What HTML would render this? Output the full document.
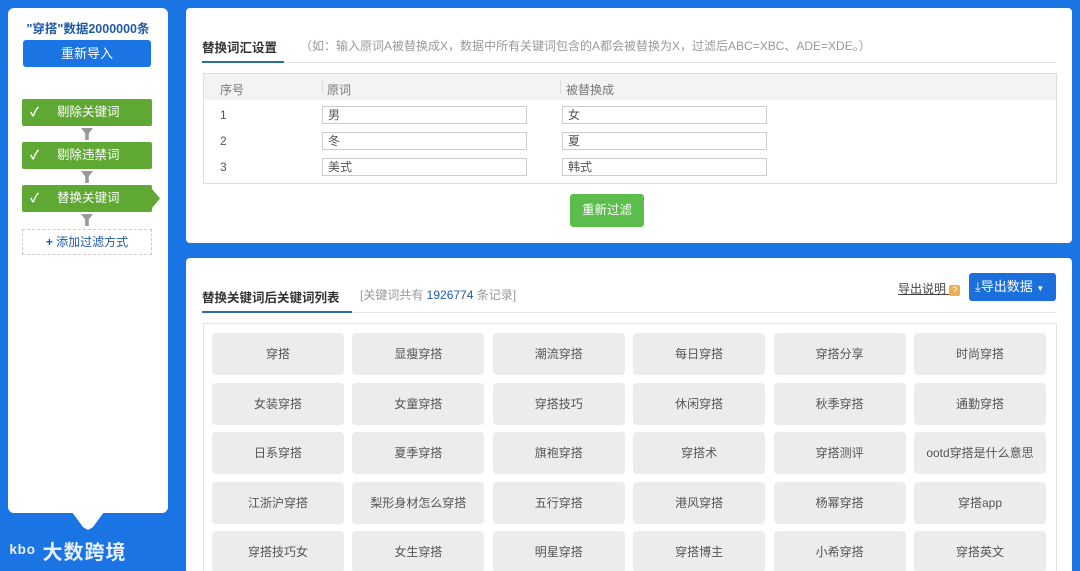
<!DOCTYPE html><html style="width:1080px;height:571px;overflow:hidden"><head><meta charset="utf-8"><style>
*{margin:0;padding:0;box-sizing:border-box}
body{width:1080px;height:571px;overflow:hidden;background:#1b74e4;font-family:"Liberation Sans","Noto Sans CJK SC",sans-serif;position:relative;font-size:12px;color:#555}
.abs{position:absolute}
.side{left:8px;top:8px;width:160px;height:505px;background:#fff;border-radius:6px}
.notch{left:63px;top:500px;width:50px;height:30px;background:#fff;clip-path:polygon(0 0,100% 0,60% 90%,50% 100%,40% 90%)}
.step{left:22px;width:130px;height:27px;background:#5ea833;color:#fff;border-radius:2px;font-size:12.5px;line-height:27px}
.step b{position:absolute;left:8px;font-weight:bold}
.step span{position:absolute;left:35px}
.fun{left:81px;width:12px;height:12px;background:#999;clip-path:polygon(0 0,100% 0,65% 45%,65% 100%,35% 100%,35% 45%)}
.card{background:#fff;border-radius:4px;left:186px;width:886px}
.tab{font-size:12.5px;color:#333;font-weight:bold}
.inp{position:absolute;height:18px;border:1px solid #ccc;font-size:12px;color:#555;padding-left:5px;line-height:16px;width:205px}
.kw{position:absolute;width:132px;height:42px;background:#ececec;border-radius:4px;text-align:center;line-height:42px;font-size:12px;color:#555}
</style></head><body>
<div class="abs side"></div><div class="abs notch"></div>
<div class="abs" style="left:8px;top:18px;width:160px;text-align:center;color:#1f5aa8;font-weight:bold;font-size:12.5px">"穿搭"数据2000000条</div>
<div class="abs" style="left:23px;top:40px;width:128px;height:27px;background:#1b74e4;border-radius:3px;color:#fff;text-align:center;line-height:27px;font-size:13px">重新导入</div>
<div class="abs step" style="top:99px"><b>✓</b><span>剔除关键词</span></div>
<div class="abs fun" style="top:128px"></div>
<div class="abs step" style="top:142px"><b>✓</b><span>剔除违禁词</span></div>
<div class="abs fun" style="top:171px"></div>
<div class="abs step" style="top:185px"><b>✓</b><span>替换关键词</span></div>
<div class="abs" style="left:152px;top:189px;width:8px;height:19px;background:#5ea833;clip-path:polygon(0 0,100% 50%,0 100%)"></div>
<div class="abs fun" style="top:214px"></div>
<div class="abs" style="left:22px;top:229px;width:130px;height:26px;border:1px dashed #ccc;text-align:center;line-height:24px;color:#1f5aa8;font-size:12px"><b>+</b> 添加过滤方式</div>
<div class="abs" style="left:10px;top:536px;color:#e8f0ff;font-size:20px;font-weight:bold;letter-spacing:1px">ᵏᵇᵒ 大数跨境</div>

<div class="abs card" style="top:8px;height:235px"></div>
<div class="abs tab" style="left:202px;top:37px">替换词汇设置</div>
<div class="abs" style="left:300px;top:37px;color:#999;font-size:12px">（如：输入原词A被替换成X，数据中所有关键词包含的A都会被替换为X，过滤后ABC=XBC、ADE=XDE。）</div>
<div class="abs" style="left:202px;top:62px;width:854px;height:1px;background:#e5e5e5"></div>
<div class="abs" style="left:202px;top:61px;width:82px;height:2px;background:#2b6cb0"></div>
<div class="abs" style="left:203px;top:73px;width:854px;height:111px;border:1px solid #ddd"></div>
<div class="abs" style="left:204px;top:74px;width:852px;height:26px;background:#f3f3f3"></div>
<div class="abs" style="left:220px;top:81px;color:#777">序号</div><div class="abs" style="left:322px;top:80px;width:1px;height:14px;background:#ddd"></div>
<div class="abs" style="left:327px;top:81px;color:#777">原词</div><div class="abs" style="left:560px;top:80px;width:1px;height:14px;background:#ddd"></div>
<div class="abs" style="left:566px;top:81px;color:#777">被替换成</div>
<div class="abs" style="left:220px;top:108px">1</div><div class="inp" style="left:322px;top:106px">男</div><div class="inp" style="left:562px;top:106px">女</div>
<div class="abs" style="left:220px;top:134px">2</div><div class="inp" style="left:322px;top:132px">冬</div><div class="inp" style="left:562px;top:132px">夏</div>
<div class="abs" style="left:220px;top:160px">3</div><div class="inp" style="left:322px;top:158px">美式</div><div class="inp" style="left:562px;top:158px">韩式</div>
<div class="abs" style="left:570px;top:194px;width:74px;height:33px;background:#5cbd4c;border-radius:3px;color:#fff;text-align:center;line-height:33px;font-size:12.5px">重新过滤</div>

<div class="abs card" style="top:258px;height:330px"></div>
<div class="abs tab" style="left:202px;top:287px">替换关键词后关键词列表</div>
<div class="abs" style="left:360px;top:286px;color:#999">[关键词共有 <span style="color:#1f5aa8">1926774</span> 条记录]</div>
<div class="abs" style="left:202px;top:312px;width:854px;height:1px;background:#e5e5e5"></div>
<div class="abs" style="left:202px;top:311px;width:150px;height:2px;background:#2b6cb0"></div>
<div class="abs" style="left:898px;top:280px;color:#444;text-decoration:underline">导出说明 <span style="display:inline-block;width:11px;height:11px;background:#f0ad4e;color:#fff;font-size:9px;line-height:11px;text-align:center;border-radius:2px;text-decoration:none">?</span></div>
<div class="abs" style="left:969px;top:273px;width:87px;height:28px;background:#1b6fdc;border-radius:3px;color:#fff;line-height:28px;font-size:13px;padding-left:6px">⤓导出数据 <span style="font-size:8px">▼</span></div>
<div class="abs" style="left:203px;top:323px;width:854px;height:260px;border:1px solid #e3e3e3"></div>
<div id="g"></div>
<script>
var w=["穿搭","显瘦穿搭","潮流穿搭","每日穿搭","穿搭分享","时尚穿搭","女装穿搭","女童穿搭","穿搭技巧","休闲穿搭","秋季穿搭","通勤穿搭","日系穿搭","夏季穿搭","旗袍穿搭","穿搭术","穿搭测评","ootd穿搭是什么意思","江浙沪穿搭","梨形身材怎么穿搭","五行穿搭","港风穿搭","杨幂穿搭","穿搭app","穿搭技巧女","女生穿搭","明星穿搭","穿搭博主","小希穿搭","穿搭英文"],h="";
for(var i=0;i<w.length;i++){h+='<div class="kw" style="left:'+(212+(i%6)*140.4)+'px;top:'+(333+Math.floor(i/6)*49.6)+'px">'+w[i]+'</div>'}
document.getElementById("g").innerHTML=h;
</script>
</body></html>
